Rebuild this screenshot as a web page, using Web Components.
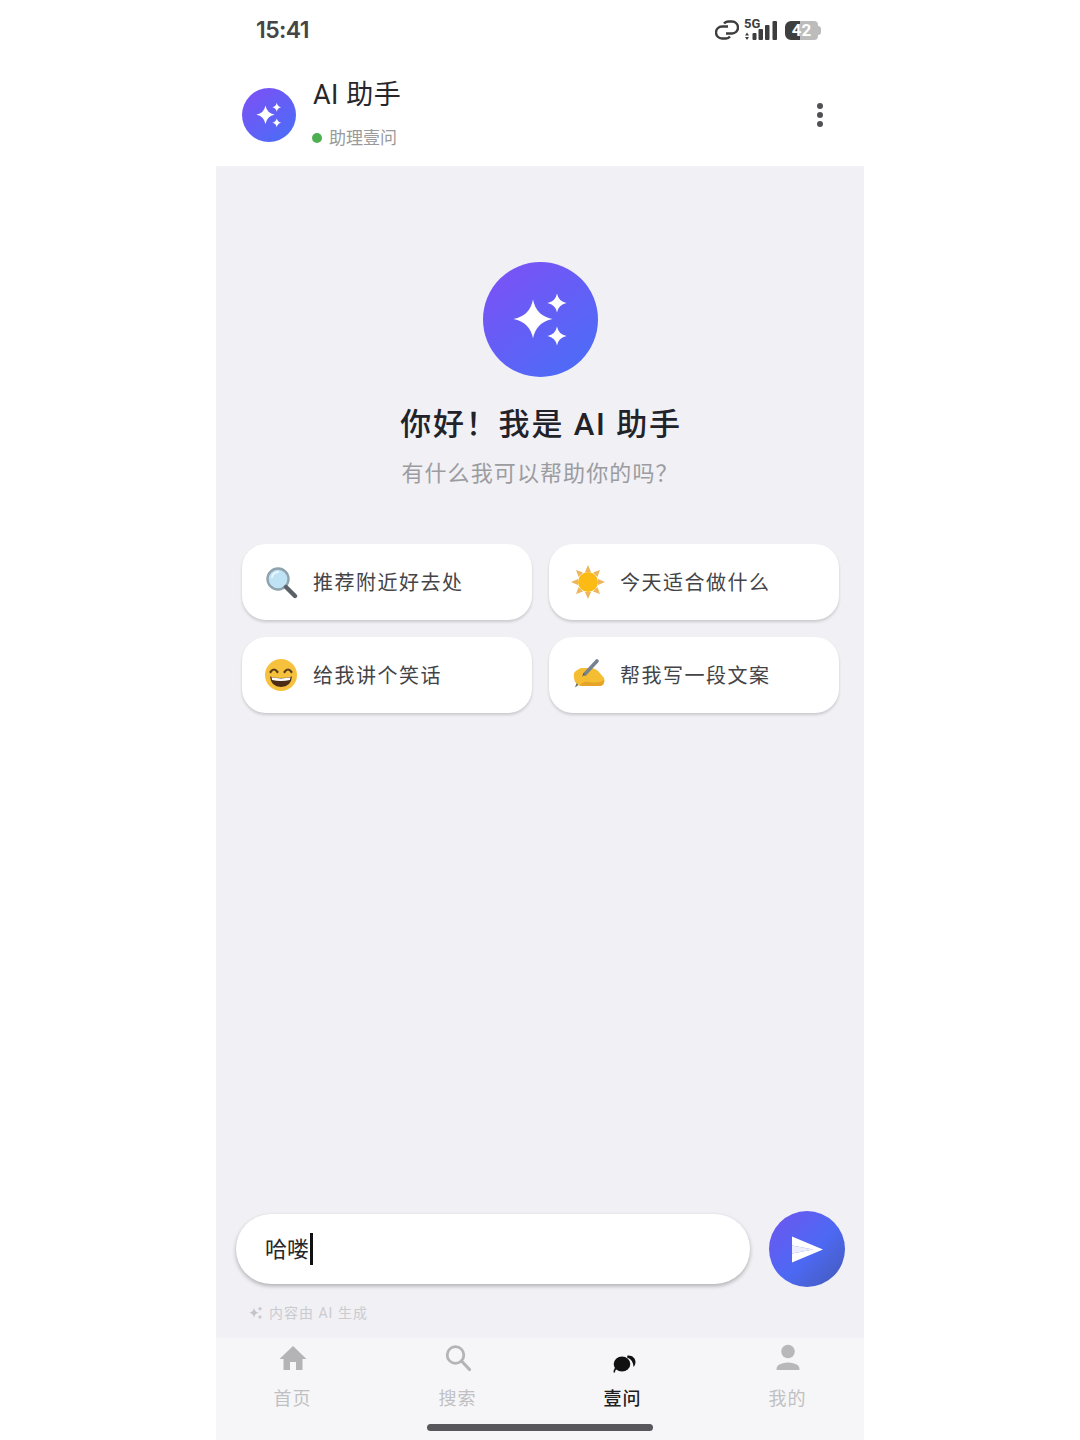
<!DOCTYPE html>
<html lang="zh-CN">
<head>
<meta charset="utf-8">
<title>AI 助手</title>
<style>
    html, body {
        margin: 0;
        background: #fff;
        font-family: Roboto, "Noto Sans CJK SC", sans-serif;
    }
</style>
</head>
<body>
<phone-app>
    <phone-status slot="status"></phone-status>
    <chat-header slot="header"></chat-header>
    <welcome-hero slot="main"></welcome-hero>
    <prompt-grid slot="main">
        <prompt-card icon="search">推荐附近好去处</prompt-card>
        <prompt-card icon="sun">今天适合做什么</prompt-card>
        <prompt-card icon="grin">给我讲个笑话</prompt-card>
        <prompt-card icon="write">帮我写一段文案</prompt-card>
    </prompt-grid>
    <chat-composer slot="composer">哈喽</chat-composer>
    <tab-bar slot="tabs">
        <tab-item icon="home">首页</tab-item>
        <tab-item icon="search">搜索</tab-item>
        <tab-item icon="ask" active>壹问</tab-item>
        <tab-item icon="user">我的</tab-item>
    </tab-bar>
</phone-app>

<script>
// star shape used by all the sparkle logos
function star(x, y, r) {
    const k = r * 0.16;
    return `M${x} ${y - r}Q${x + k} ${y - k} ${x + r} ${y}Q${x + k} ${y + k} ${x} ${y + r}Q${x - k} ${y + k} ${x - r} ${y}Q${x - k} ${y - k} ${x} ${y - r}Z`;
}

const SPARKS = star(50, 57, 19.5) + star(74, 41, 9.5) + star(74, 74, 9.5);

const PROMPT_ICONS = {
    search: `<circle cx="14" cy="14" r="10.5" fill="#bfe3f5" stroke="#8fa3ad" stroke-width="2.4"/>
        <path d="M8 12a7 7 0 0 1 6-5" fill="none" stroke="#e8f7ff" stroke-width="2" stroke-linecap="round"/>
        <path d="M22 22l9 9" stroke="#5b6166" stroke-width="4.4" stroke-linecap="round"/>`,
    sun: `<path d="M17 0l3 7h-6zM17 34l-3-7h6zM0 17l7-3v6zM34 17l-7 3v-6zM5 5l7 2.6-4.4 4.400zM29 29l-7-2.600 4.400-4.400zM29 5l-2.600 7-4.400-4.400zM5 29l2.600-7 4.400 4.400z" fill="#eeb55c"/>
        <circle cx="17" cy="17" r="10" fill="#fbbb14"/>`,
    grin: `<circle cx="17" cy="17" r="16" fill="#f6c13c"/>
        <path d="M6.500 14q3.500-5 7 0M20.500 14q3.500-5 7 0" fill="none" stroke="#5a3d1c" stroke-width="2.200" stroke-linecap="round"/>
        <path d="M6 18.500q11 3 22 0q-1 10.500-11 10.500T6 18.500z" fill="#4b2c14"/>
        <path d="M7.500 19.300q9.500 2.200 19 0l-.6 2.700q-8.900 1.800-17.800 0z" fill="#fff"/>`,
    write: `<path d="M3 15C5 12 9 10 12 10L20 10C24 10.500 26 12 28 14L33 20C34.500 24 32 28 29 28L9 28L4 24C3 21 2.500 18 3 15Z" fill="#f5bd31"/>
        <path d="M9 28C10 25 14 23 18 24C23 25 28 25 33 22C33.500 25 31.500 28 29 28Z" fill="#e5a428"/>
        <path d="M26 3L14 16" stroke="#76838f" stroke-width="3.600" stroke-linecap="round"/>
        <path d="M14 16L11 19L12.500 15Z" fill="#5c5a50"/>
        <path d="M4 29.500L5.500 25L7.500 27Z" fill="#6b6f62"/>`
};

const TAB_ICONS = {
    home: `<path d="M15 3L1.500 16H5.500V27H12V19H18V27H24.500V16H28.500Z" fill="#b4b4b6"/>`,
    search: `<circle cx="12.500" cy="12" r="8.300" fill="none" stroke="#b4b4b6" stroke-width="2.800"/>
        <path d="M18.500 18l8 8.500" stroke="#b4b4b6" stroke-width="3.200" stroke-linecap="round"/>`,
    ask: `<ellipse cx="14" cy="21" rx="8.300" ry="7.500" fill="#111"/>
        <path d="M19.500 12.500C24 12 27.500 15 27.500 19C27.500 21 26.500 23 25.500 24C25.500 20 23.500 16 19 14.500Z" fill="#111"/>
        <path d="M7.500 24C6 26 5.500 27.500 5.500 29.500L7 29.500C7 28 7.500 27 8.500 26Z" fill="#111"/>`,
    user: `<circle cx="15" cy="8.500" r="6.800" fill="#b8b8ba"/>
        <path d="M3.500 27c0-2 .2-3.500 2-5 5-3.400 14-3.400 19 0 1.800 1.500 2 3 2 5z" fill="#b8b8ba"/>`
};

class PhoneApp extends HTMLElement {
    constructor() {
        super();
        this.attachShadow({ mode: 'open' });
        this.shadowRoot.innerHTML = `
            <style>
            :host {
                display: flex;
                flex-direction: column;
                width: 648px;
                height: 1440px;
                margin: 0 auto;
                background: #fff;
                overflow: hidden;
            }
            .main {
                flex: 1;
                display: flex;
                flex-direction: column;
                background: #f0f0f5;
            }
            .grow {
                flex: 1;
            }
            </style>
            <slot name="status"></slot>
            <slot name="header"></slot>
            <div class="main">
                <slot name="main"></slot>
                <div class="grow"></div>
                <slot name="composer"></slot>
            </div>
            <slot name="tabs"></slot>
        `;
    }
}

class PhoneStatus extends HTMLElement {
    constructor() {
        super();
        this.attachShadow({ mode: 'open' });
        this.shadowRoot.innerHTML = `
            <style>
            :host {
                display: flex;
                align-items: center;
                justify-content: space-between;
                height: 60px;
                padding: 0 43px 0 40px;
                color: #454545;
            }
            .time {
                font: 600 23px/1 Inter, Roboto, sans-serif;
                letter-spacing: -0.6px;
            }
            .icons {
                display: flex;
                align-items: center;
                gap: 5px;
            }
            .net {
                display: block;
                width: 34px;
                height: 22px;
                position: relative;
            }
            .five {
                font: 700 13px/1 Roboto, sans-serif;
                position: absolute;
                left: 0;
                top: -2px;
                color: #3d3d3d;
            }
            svg {
                display: block;
            }
            .bat {
                display: flex;
                align-items: center;
                margin-left: 2px;
            }
            .battery {
                display: flex;
                align-items: center;
                justify-content: center;
                width: 33px;
                height: 19px;
                border-radius: 6px 4px 4px 6px;
                background: linear-gradient(90deg, #3f3f3f 0 46%, #bcbcbc 46% 100%);
                color: #fff;
                font: 700 17px/1 Roboto, sans-serif;
            }
            .tip {
                width: 3px;
                height: 9px;
                border-radius: 0 3px 3px 0;
                background: #bcbcbc;
            }
            </style>
            <span class="time">15:41</span>
            <span class="icons">
                <svg width="24" height="20" viewBox="0 0 24 20" fill="none" stroke="#3d3d3d" stroke-width="2.400">
                    <path d="M13 6.500H7a6 6 0 0 0 0 12h4a5.500 5.500 0 0 0 4-2"/>
                    <path d="M11 13.500h6a6 6 0 0 0 0-12h-4a5.500 5.500 0 0 0-4 2"/>
                </svg>
                <span class="net">
                    <span class="five">5G</span>
                    <svg width="34" height="22" viewBox="0 0 34 22" fill="#3d3d3d">
                        <path d="M3 13.500L5 16.500H1zM3 21L1 18H5z"/>
                        <rect x="8.500" y="14" width="4" height="7" rx="1"/>
                        <rect x="14.500" y="10" width="4.500" height="11" rx="1"/>
                        <rect x="21" y="6" width="4.500" height="15" rx="1"/>
                        <rect x="28.500" y="2" width="4.500" height="19" rx="1"/>
                    </svg>
                </span>
                <span class="bat"><span class="battery">42</span><span class="tip"></span></span>
            </span>
        `;
    }
}

class SparkLogo extends HTMLElement {
    constructor() {
        super();
        this.attachShadow({ mode: 'open' });
        const size = this.getAttribute('size') || 54;
        this.shadowRoot.innerHTML = `
            <style>
            :host {
                display: block;
                flex: none;
                width: ${size}px;
                height: ${size}px;
            }
            svg {
                display: block;
            }
            </style>
            <svg width="${size}" height="${size}" viewBox="0 0 115 115">
                <defs>
                    <linearGradient id="g" x1="0.15" y1="0.05" x2="0.85" y2="0.95">
                        <stop offset="0" stop-color="#7a52f6"/>
                        <stop offset="1" stop-color="#4c6cf6"/>
                    </linearGradient>
                </defs>
                <circle cx="57.5" cy="57.5" r="57.5" fill="url(#g)"/>
                <path d="${SPARKS}" fill="#fff"/>
            </svg>
        `;
    }
}

class ChatHeader extends HTMLElement {
    constructor() {
        super();
        this.attachShadow({ mode: 'open' });
        this.shadowRoot.innerHTML = `
            <style>
            :host {
                display: flex;
                align-items: center;
                gap: 16px;
                height: 106px;
                padding: 0 41px 0 26px;
                box-sizing: border-box;
            }
            spark-logo, .more {
                margin-top: 4px;
            }
            .info {
                flex: 1;
                display: flex;
                flex-direction: column;
                gap: 12px;
            }
            .name {
                font-size: 27px;
                line-height: 38px;
                font-weight: 400;
                letter-spacing: 0.5px;
                margin-left: 1px;
                color: #26262b;
            }
            .sub {
                display: flex;
                align-items: center;
                gap: 7px;
                font-size: 17px;
                line-height: 24px;
                color: #9a9a9a;
            }
            .dot {
                width: 10px;
                height: 10px;
                border-radius: 50%;
                background: #4caf50;
            }
            .more {
                display: flex;
                flex-direction: column;
                gap: 2.6px;
            }
            .more i {
                width: 6.400px;
                height: 6.400px;
                border-radius: 50%;
                background: #505055;
            }
            </style>
            <spark-logo size="54"></spark-logo>
            <div class="info">
                <div class="name">AI 助手</div>
                <div class="sub"><span class="dot"></span>助理壹问</div>
            </div>
            <div class="more"><i></i><i></i><i></i></div>
        `;
    }
}

class WelcomeHero extends HTMLElement {
    constructor() {
        super();
        this.attachShadow({ mode: 'open' });
        this.shadowRoot.innerHTML = `
            <style>
            :host {
                display: flex;
                flex-direction: column;
                align-items: center;
                padding-top: 96px;
            }
            h1 {
                margin: 25px 0 0;
                padding-left: 2px;
                font-size: 31px;
                line-height: 46px;
                font-weight: 500;
                letter-spacing: 1.8px;
                color: #22222a;
            }
            p {
                margin: 10px 0 0;
                font-size: 22px;
                line-height: 32px;
                letter-spacing: 1.1px;
                color: #9c9ca0;
            }
            </style>
            <spark-logo size="115"></spark-logo>
            <h1>你好！我是 AI 助手</h1>
            <p>有什么我可以帮助你的吗？</p>
        `;
    }
}

class PromptGrid extends HTMLElement {
    constructor() {
        super();
        this.attachShadow({ mode: 'open' });
        this.shadowRoot.innerHTML = `
            <style>
            :host {
                display: grid;
                grid-template-columns: 1fr 1fr;
                gap: 17px;
                padding: 54px 25px 0 26px;
            }
            </style>
            <slot></slot>
        `;
    }
}

class PromptCard extends HTMLElement {
    constructor() {
        super();
        this.attachShadow({ mode: 'open' });
        const icon = PROMPT_ICONS[this.getAttribute('icon')];
        this.shadowRoot.innerHTML = `
            <style>
            :host {
                display: flex;
                align-items: center;
                gap: 15px;
                height: 76px;
                padding: 0 22px;
                box-sizing: border-box;
                background: #fff;
                border-radius: 24px;
                box-shadow: 0 2px 3px rgba(0, 0, 0, 0.16);
                font-size: 20px;
                letter-spacing: 1.5px;
                color: #444448;
            }
            svg {
                flex: none;
            }
            .label {
                margin-bottom: 2px;
            }
            </style>
            <svg width="34" height="34" viewBox="0 0 34 34">${icon}</svg>
            <span class="label"><slot></slot></span>
        `;
    }
}

class ChatComposer extends HTMLElement {
    constructor() {
        super();
        this.attachShadow({ mode: 'open' });
        this.shadowRoot.innerHTML = `
            <style>
            :host {
                display: flex;
                flex-direction: column;
                padding: 0 19px 0 20px;
            }
            .row {
                display: flex;
                align-items: center;
                gap: 19px;
            }
            .input {
                flex: 1;
                display: flex;
                align-items: center;
                height: 70px;
                padding-left: 29px;
                border-radius: 35px;
                background: #fff;
                box-shadow: 0 2px 4px rgba(0, 0, 0, 0.28);
                font-size: 22px;
                color: #26262a;
            }
            .text {
                margin-bottom: 4px;
            }
            .caret {
                width: 3px;
                height: 32px;
                margin-left: 1px;
                background: #111;
            }
            .send {
                flex: none;
                display: flex;
                align-items: center;
                justify-content: center;
                width: 76px;
                height: 76px;
                border-radius: 50%;
                background: linear-gradient(135deg, #6f55ef 0%, #4d69f4 55%, #4459b4 100%);
            }
            .note {
                display: flex;
                align-items: center;
                gap: 5px;
                height: 24px;
                margin-top: 13px;
                margin-bottom: 14px;
                padding-left: 13px;
                font-size: 14px;
                letter-spacing: 1px;
                color: #cbcbcf;
            }
            </style>
            <div class="row">
                <div class="input"><span class="text"><slot></slot></span><span class="caret"></span></div>
                <div class="send">
                    <svg width="32" height="27" viewBox="0 0 32 27">
                        <path d="M1 9.500L22 13.500L1 17.500Z" fill="#eceeff"/>
                        <path d="M1 0.500L32 13.500L1 26.500V17.500L22 13.500L1 9.500Z" fill="#fff"/>
                    </svg>
                </div>
            </div>
            <div class="note">
                <svg width="15" height="15" viewBox="30 26 60 60"><path d="${SPARKS}" fill="#c4c4c8"/></svg>
                内容由 AI 生成
            </div>
        `;
    }
}

class TabBar extends HTMLElement {
    constructor() {
        super();
        this.attachShadow({ mode: 'open' });
        this.shadowRoot.innerHTML = `
            <style>
            :host {
                display: flex;
                flex-direction: column;
                align-items: center;
                height: 102px;
                background: #f6f6f8;
            }
            .tabs {
                display: flex;
                gap: 95px;
                padding-top: 5px;
            }
            .home {
                width: 226px;
                height: 7px;
                margin-top: 12px;
                border-radius: 4px;
                background: #58585c;
            }
            </style>
            <div class="tabs"><slot></slot></div>
            <div class="home"></div>
        `;
    }
}

class TabItem extends HTMLElement {
    constructor() {
        super();
        this.attachShadow({ mode: 'open' });
        const icon = TAB_ICONS[this.getAttribute('icon')];
        this.shadowRoot.innerHTML = `
            <style>
            :host {
                display: flex;
                flex-direction: column;
                align-items: center;
                gap: 13px;
                width: 70px;
                font-size: 18px;
                line-height: 26px;
                letter-spacing: 1px;
                color: #c0c0c2;
            }
            :host([active]) {
                color: #1e1e22;
                font-weight: 500;
            }
            svg {
                display: block;
            }
            </style>
            <svg width="30" height="30" viewBox="0 0 30 30">${icon}</svg>
            <slot></slot>
        `;
    }
}

customElements.define('spark-logo', SparkLogo);
customElements.define('phone-status', PhoneStatus);
customElements.define('chat-header', ChatHeader);
customElements.define('welcome-hero', WelcomeHero);
customElements.define('prompt-card', PromptCard);
customElements.define('prompt-grid', PromptGrid);
customElements.define('chat-composer', ChatComposer);
customElements.define('tab-item', TabItem);
customElements.define('tab-bar', TabBar);
customElements.define('phone-app', PhoneApp);
</script>
</body>
</html>
